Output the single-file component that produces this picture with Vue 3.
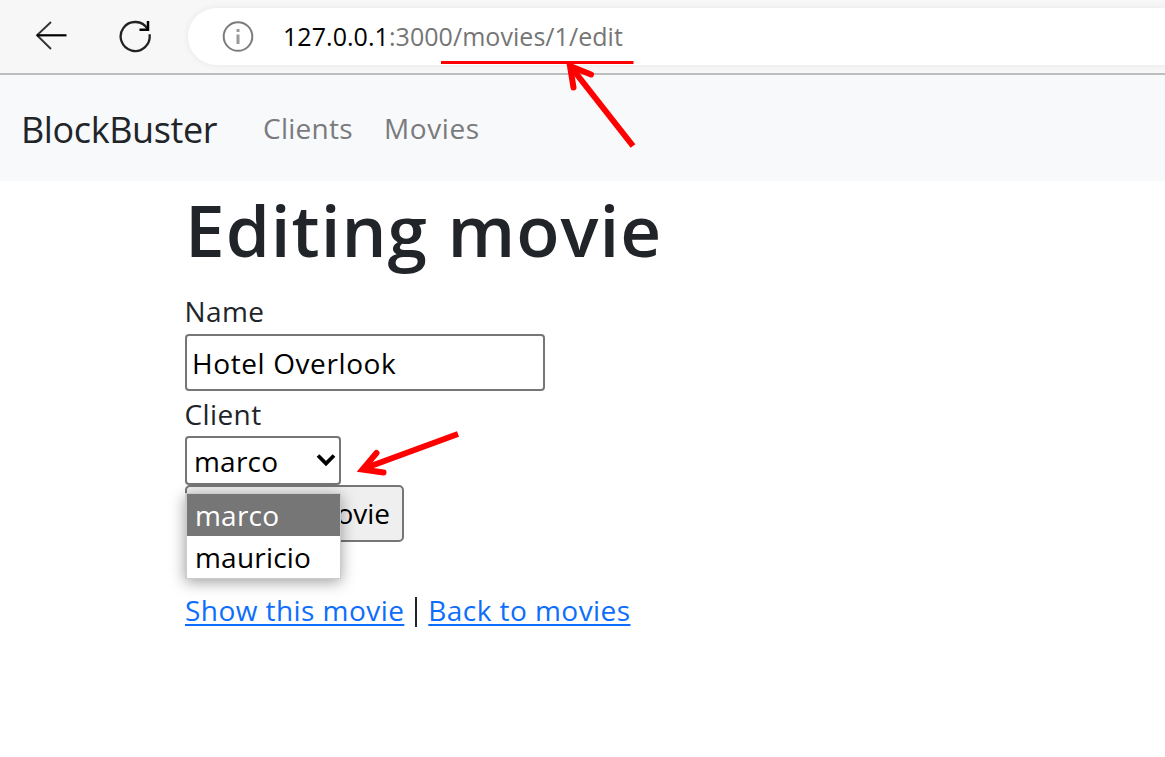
<script setup>
import { ref } from 'vue'

const name = ref('Hotel Overlook')
const clients = ['marco', 'mauricio']
const selected = ref('marco')
</script>

<template>
  <div class="page">
    <header class="chrome">
      <svg class="back" width="32" height="30" viewBox="0 0 32 30" fill="none" stroke="#333" stroke-width="1.900">
        <path d="M16 1 2 14.300 16 28" />
        <path d="M31.500 14.300H2" stroke="#000" stroke-width="2.200" />
      </svg>
      <svg class="reload" width="34" height="34" viewBox="0 0 34 34" fill="none" stroke="#222" stroke-width="2.300">
        <path d="M30.500 15.200A14.500 14.500 0 1 1 28.600 10" />
        <path d="M29 2V10.800H20.500" stroke="#000" stroke-width="2.500" />
      </svg>
      <div class="address">
        <svg width="32" height="32" viewBox="0 0 32 32" fill="none" stroke="#7c7c7c">
          <circle cx="16" cy="15.500" r="14.300" stroke-width="2" />
          <path d="M16 13.500v9.500M16 8v3" stroke-width="3" stroke="#9a9a9a" />
        </svg>
        <span class="url"><b>127.0.0.1</b>:3000/movies/1/edit</span>
      </div>
    </header>

    <nav class="navbar">
      <a class="brand">BlockBuster</a>
      <a class="nav-link clients">Clients</a>
      <a class="nav-link movies">Movies</a>
    </nav>

    <main>
      <h1>Editing movie</h1>
      <label class="l-name">Name</label>
      <div class="input">{{ name }}</div>
      <label class="l-client">Client</label>
      <div class="select">
        <span>{{ selected }}</span>
        <svg width="20" height="14" viewBox="0 0 20 14" fill="none" stroke="#000" stroke-width="3.800">
          <path d="M2 2.500 10 10.500 18 2.500" />
        </svg>
      </div>
      <div class="submit-row">
        <div class="button">ovie</div>
        <ul class="options">
          <li v-for="c in clients" :key="c" :class="{ active: c === selected }">{{ c }}</li>
        </ul>
      </div>
      <p class="links"><a>Show this movie</a><i></i><a>Back to movies</a></p>
    </main>

    <svg class="marks" width="1165" height="757" fill="none" stroke="#f00">
      <path d="M441 62.500H633.500" stroke-width="3" />
      <path d="M633 146 571 67" stroke-width="6" />
      <path d="M573.500 87.500 570 66 591 74.500" stroke-width="6" stroke-linecap="round" />
      <path d="M458 434 364 468.500" stroke-width="6" />
      <path d="M376.500 453 362.500 469.500 383.500 472.500" stroke-width="6" stroke-linecap="round" />
    </svg>
  </div>
</template>

<style>
body { margin: 0; background: #fff; overflow: hidden; }
</style>

<style scoped>
.page {
  position: relative;
  height: 757px;
  overflow: hidden;
  font-family: "Open Sans", "Noto Sans", sans-serif;
  font-size: 28px;
  color: #212529;
  white-space: nowrap;
}
.chrome {
  box-sizing: border-box;
  height: 75px;
  display: flex;
  align-items: flex-start;
  background: #f7f7f7;
  border-bottom: 2px solid #bdbdbd;
}
.back { margin: 21px 0 0 35px; }
.reload { margin: 19px 0 0 52px; }
.address {
  flex: 1;
  height: 57px;
  margin: 8px 0 0 35px;
  padding-left: 34px;
  display: flex;
  align-items: center;
  border-radius: 29px 0 0 29px;
  background: #fff;
  box-shadow: 0 0 6px #e6e6e6;
}
.url { margin-left: 29px; font-size: 25px; line-height: 57px; color: #757575; letter-spacing: 0.05px; }
.url b { font-weight: 400; color: #000; }
.navbar {
  height: 106px;
  display: flex;
  background: #f8f9fb;
}
.brand { margin-left: 21px; width: 242px; font-size: 36px; line-height: 109px; letter-spacing: -0.4px; }
.nav-link { line-height: 106px; color: #7a7b7c; letter-spacing: 0.25px; }
.clients { width: 121px; }
.movies { letter-spacing: 0.6px; }
main { padding-left: 185px; }
h1 {
  margin: 0;
  height: 110px;
  font-size: 71px;
  line-height: 97px;
  font-weight: 600;
  letter-spacing: 1px;
}
label { display: block; height: 43px; line-height: 40px; letter-spacing: 0.4px; text-indent: -0.5px; }
.input {
  box-sizing: border-box;
  width: 360px;
  height: 57px;
  padding-left: 5px;
  border: 2px solid #767676;
  border-radius: 4px;
  line-height: 54px;
  color: #000;
  letter-spacing: 0.6px;
}
.l-client { height: 45px; line-height: 46px; }
.select {
  box-sizing: border-box;
  width: 156px;
  height: 49px;
  display: flex;
  justify-content: space-between;
  padding: 0 3px 0 7px;
  border: 2px solid #767676;
  border-radius: 4px;
  line-height: 47px;
  color: #000;
  letter-spacing: 0.2px;
}
.select svg { margin-top: 15px; }
.submit-row { position: relative; height: 104px; }
.button {
  box-sizing: border-box;
  width: 219px;
  height: 57px;
  padding-right: 12px;
  border: 2px solid #767676;
  border-radius: 5px;
  background: #efefef;
  color: #000;
  line-height: 53px;
  text-align: right;
}
.options {
  position: absolute;
  left: 0;
  top: 8px;
  box-sizing: border-box;
  width: 156px;
  margin: 0;
  padding: 0;
  list-style: none;
  background: #fff;
  border: 1px solid #ccc;
  border-left-width: 2px;
  box-shadow: 0 3px 14px rgba(0, 0, 0, 0.38);
  color: #000;
  letter-spacing: 0.2px;
}
.options li { height: 42px; padding-left: 8px; line-height: 43px; }
.options .active { background: #767676; color: #fff; }
.links { margin: 0; display: flex; line-height: 43px; letter-spacing: 0.44px; }
.links a { color: #0d6efd; text-decoration: underline; text-decoration-thickness: 2px; text-underline-offset: 3px; }
.links i { width: 2px; height: 30px; margin: 8px 11px 0; background: #212529; }
.marks { position: absolute; left: 0; top: 0; }
</style>
